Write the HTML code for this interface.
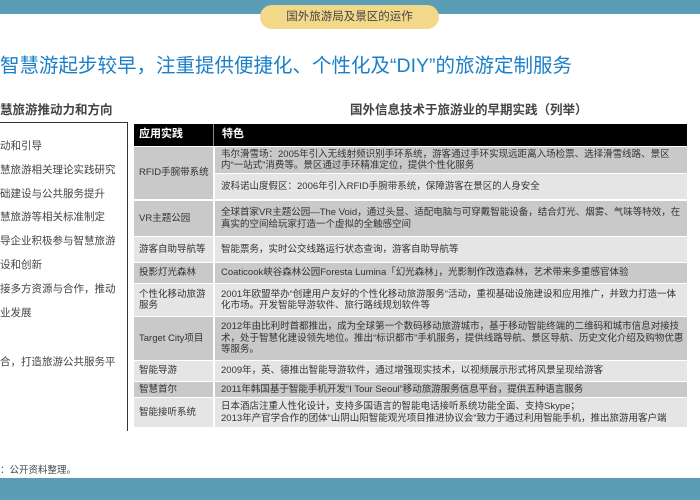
<!DOCTYPE html>
<html><head><meta charset="utf-8"><style>
*{margin:0;padding:0;box-sizing:border-box}
body{width:700px;height:500px;position:relative;overflow:hidden;background:#fff;font-family:"Liberation Sans","Noto Sans CJK SC",sans-serif;color:#333}
.abs{position:absolute}
.band{left:0;width:700px;background:#5a9db4}
.badge{left:260px;top:5px;width:179px;height:24px;background:#f4d88a;border-radius:12px;text-align:center;font-size:11.5px;line-height:24px;color:#444}
.title{left:0;top:49px;font-size:19.5px;color:#1a7fc8;white-space:nowrap}
.sub{top:99px;font-size:12.5px;font-weight:bold;color:#444;white-space:nowrap}
.lbox{left:-10px;top:122px;width:138px;height:309px;border-top:1px solid #333;border-right:1px solid #333}
.li{left:0;font-size:10.5px;color:#444;white-space:nowrap}
.r{position:absolute;left:134px;width:553px;font-size:9.5px;color:#333;line-height:11.5px}
.c1{position:absolute;left:0;width:79px;top:0;bottom:0;display:flex;align-items:center;padding-left:5px;white-space:nowrap}
.c2{position:absolute;left:81px;right:0;top:0;bottom:0;display:flex;align-items:center;padding-left:6px;padding-right:3px}
.d{background:#c9c9c9}.l{background:#e5e5e5}
</style></head><body>
<div class="abs band" style="top:0;height:14px"></div>
<div class="abs badge">国外旅游局及景区的运作</div>
<div class="abs title">智慧游起步较早，注重提供便捷化、个性化及“DIY”的旅游定制服务</div>
<div class="abs sub" style="left:0">慧旅游推动力和方向</div>
<div class="abs sub" style="left:350px">国外信息技术于旅游业的早期实践（列举）</div>
<div class="abs lbox"></div>
<div class="abs li" style="top:138px">动和引导</div>
<div class="abs li" style="top:162px">慧旅游相关理论实践研究</div>
<div class="abs li" style="top:186px">础建设与公共服务提升</div>
<div class="abs li" style="top:209px">慧旅游等相关标准制定</div>
<div class="abs li" style="top:233px">导企业积极参与智慧旅游</div>
<div class="abs li" style="top:257px">设和创新</div>
<div class="abs li" style="top:281px">接多方资源与合作，推动</div>
<div class="abs li" style="top:305px">业发展</div>
<div class="abs li" style="top:354px">合，打造旅游公共服务平</div>
<div class="abs li" style="top:462px;font-size:9.5px">：公开资料整理。</div>

<div class="r" style="top:124px;height:22px;background:#000;color:#fff;font-weight:bold;font-size:11px">
<div class="c1">应用实践</div><div class="c2" style="border-left:1px solid #888;left:79px;padding-left:8px">特色</div></div>

<div class="r" style="top:147px;height:52px"><div class="c1 d">RFID手腕带系统</div></div>
<div class="r d" style="top:147px;height:26px;left:215px;width:472px"><div class="c2" style="left:0"><div>韦尔滑雪场：2005年引入无线射频识别手环系统，游客通过手环实现远距离入场检票、选择滑雪线路、景区内“一站式”消费等。景区通过手环精准定位，提供个性化服务</div></div></div>
<div class="r l" style="top:174px;height:25px;left:215px;width:472px"><div class="c2" style="left:0"><div>波科诺山度假区：2006年引入RFID手腕带系统，保障游客在景区的人身安全</div></div></div>

<div class="r" style="top:201px;height:35px"><div class="c1 d">VR主题公园</div><div class="c2 d"><div>全球首家VR主题公园—The Void，通过头显、适配电脑与可穿戴智能设备，结合灯光、烟雾、气味等特效，在真实的空间给玩家打造一个虚拟的全触感空间</div></div></div>
<div class="r" style="top:237px;height:25px"><div class="c1 l">游客自助导航等</div><div class="c2 l"><div>智能票务，实时公交线路运行状态查询，游客自助导航等</div></div></div>
<div class="r" style="top:263px;height:20px"><div class="c1 d">投影灯光森林</div><div class="c2 d"><div>Coaticook峡谷森林公园Foresta Lumina「幻光森林」，光影制作改造森林，艺术带来多重感官体验</div></div></div>
<div class="r" style="top:284px;height:32px"><div class="c1 l">个性化移动旅游<br>服务</div><div class="c2 l"><div>2001年欧盟举办“创建用户友好的个性化移动旅游服务”活动，重视基础设施建设和应用推广，并致力打造一体化市场。开发智能导游软件、旅行路线规划软件等</div></div></div>
<div class="r" style="top:317px;height:43px"><div class="c1 d">Target City项目</div><div class="c2 d"><div>2012年由比利时首都推出，成为全球第一个数码移动旅游城市，基于移动智能终端的二维码和城市信息对接技术，处于智慧化建设领先地位。推出“标识都市”手机服务，提供线路导航、景区导航、历史文化介绍及购物优惠等服务。</div></div></div>
<div class="r" style="top:361px;height:20px"><div class="c1 l">智能导游</div><div class="c2 l"><div>2009年，英、德推出智能导游软件，通过增强现实技术，以视频展示形式将风景呈现给游客</div></div></div>
<div class="r" style="top:382px;height:15px"><div class="c1 d">智慧首尔</div><div class="c2 d"><div>2011年韩国基于智能手机开发“I Tour Seoul”移动旅游服务信息平台，提供五种语言服务</div></div></div>
<div class="r" style="top:398px;height:29px"><div class="c1 l">智能接听系统</div><div class="c2 l"><div>日本酒店注重人性化设计，支持多国语言的智能电话接听系统功能全面、支持Skype；<br>2013年产官学合作的团体“山阴山阳智能观光项目推进协议会”致力于通过利用智能手机，推出旅游用客户端</div></div></div>

<div class="abs band" style="top:478px;height:22px"></div>
</body></html>
